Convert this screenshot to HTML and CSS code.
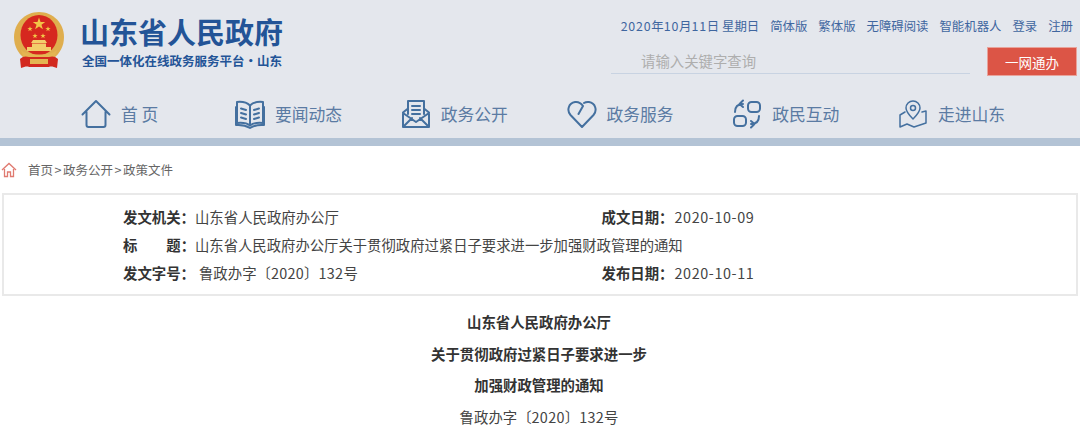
FILE: index.html

```html
<!DOCTYPE html>
<html lang="zh-CN">
<head>
  <meta charset="UTF-8" />
  <title>山东省人民政府</title>
  <link rel="stylesheet" href="styles.css">
</head>
<body>
  <!-- Header -->
  <div class="header">
    <div class="top">
      <div class="brand">
        <svg class="emblem" viewBox="0 0 52 60">
          <defs>
            <polygon id="star" points="0,-5 1.200,-1.600 4.800,-1.500 1.900,0.600 3,4 0,2 -3,4 -1.900,0.600 -4.800,-1.500 -1.200,-1.600"/>
          </defs>
          <path d="M26 0C40 0 51 11 51 25c0 9-4 16-10 21H11C5 41 1 34 1 25 1 11 12 0 26 0z" fill="#dfae4e"/>
          <ellipse cx="26" cy="23" rx="18.500" ry="20" fill="#d6271f"/>
          <use href="#star" transform="translate(26 12) scale(1.300)" fill="#f2c447"/>
          <use href="#star" transform="translate(17 17) scale(.55)" fill="#f2c447"/>
          <use href="#star" transform="translate(35 17) scale(.55)" fill="#f2c447"/>
          <use href="#star" transform="translate(22 24) scale(.55)" fill="#f2c447"/>
          <use href="#star" transform="translate(30 24) scale(.55)" fill="#f2c447"/>
          <path d="M20 28h12l2 3H18zM19 31.500h14V35h5v4H14v-4h5z" fill="#f3cd6a"/>
          <path d="M8 38c6 6 30 6 36 0l-2 6c-8 3-24 3-32 0z" fill="#e4b552"/>
          <path d="M7 47c3-3 6-3 9-2h20c3-1 6-1 9 2l-1 9c-3-1-6-2-8-1H16c-2-1-5 0-8 1z" fill="#d2291f"/>
          <path d="M17 47h18v5H17z" fill="#e4b552"/>
        </svg>
        <div class="brand-text">
          <div class="site-name">山东省人民政府</div>
          <div class="site-sub">全国一体化在线政务服务平台·山东</div>
        </div>
      </div>
      <div class="tools">
        <div class="links">
          <span class="date"><span class="nums">2020</span>年<span class="nums">10</span>月<span class="nums">11</span>日 星期日</span>
          <a>简体版</a><a>繁体版</a><a>无障碍阅读</a><a>智能机器人</a><a>登录</a><a>注册</a>
        </div>
        <div class="search-row">
          <div class="search">请输入关键字查询</div>
          <button class="one-net">一网通办</button>
        </div>
      </div>
    </div>
    <div class="nav">
      <a class="nav-item">
        <svg viewBox="0 0 30 30" width="30" height="30"><path d="M1.500 15.500 15 2l13.500 13.500M5.500 13v13a2 2 0 0 0 2 2h15a2 2 0 0 0 2-2V13"/></svg>
        <span>首 页</span>
      </a>
      <a class="nav-item">
        <svg viewBox="0 0 30 30" width="30" height="30"><path d="M15 6.500C12 3.500 7 2.500 2 3v21c5-.5 10 0 13 2.500 3-2.500 8-3 13-2.500V3c-5-.5-10 .5-13 3.500zM15 6.500v20M1 8v18c6-.5 10 .5 14 3 4-2.500 8-3.500 14-3V8M6 9.500l5 1.500M6 14l5 1.500M6 18.500l5 1.500M24 9.500 19 11M24 14l-5 1.500M24 18.500 19 20"/></svg>
        <span>要闻动态</span>
      </a>
      <a class="nav-item">
        <svg viewBox="0 0 30 30" width="30" height="30"><path d="M7 15V2h16v13M11 7h8M11 11h8M11 15h8M7 9.500l-5 4V28h26V13.500l-5-4M2 14l13 9 13-9M2 28l9-9M28 28l-9-9"/></svg>
        <span>政务公开</span>
      </a>
      <a class="nav-item">
        <svg viewBox="0 0 30 30" width="30" height="30"><path d="M15 28 3.500 16C-.5 11.500 1.500 4 8 3c3.500-.5 6 1 8 4l-4.500 8M15 28l11.500-12c4-4.500 2-12-4.500-13-2-.3-3.500 0-5 1"/></svg>
        <span>政务服务</span>
      </a>
      <a class="nav-item">
        <svg viewBox="0 0 30 30" width="30" height="30"><rect x="16" y="3" width="12" height="10" rx="3.500"/><rect x="2" y="17" width="12" height="10" rx="3.500"/><path d="M3 13c0-5 3-8 8-8M11 1.500 7.500 5 11 8M27 17c0 5-3 8-8 8M19 28.500l3.500-3.500-3.500-3"/></svg>
        <span>政民互动</span>
      </a>
      <a class="nav-item">
        <svg viewBox="0 0 30 30" width="30" height="30" class="thin"><path d="M15 20c-4-4-7-7-7-11a7 7 0 0 1 14 0c0 4-3 7-7 11z"/><circle cx="15" cy="9" r="2.500"/><path d="M7 13 2 16v12l7-3 7 3 12-4V12l-4 1"/></svg>
        <span>走进山东</span>
      </a>
    </div>
  </div>
  <div class="stripe"></div>

  <!-- Breadcrumb -->
  <div class="crumb">
    <svg viewBox="0 0 16 16" width="16" height="16"><path d="M1 8 8 1.500 15 8M3.500 7v7.500h3V10h3v4.500h3V7"/></svg>
    <span>首页<i class="sep">&gt;</i>政务公开<i class="sep">&gt;</i>政策文件</span>
  </div>

  <!-- Document info -->
  <div class="info">
    <div class="info-row">
      <div class="cell"><b>发文机关：</b>山东省人民政府办公厅</div>
      <div class="cell"><b>成文日期：</b><span class="day">2020-10-09</span></div>
    </div>
    <div class="info-row">
      <div class="cell wide"><b class="spread"><i>标</i><i>题：</i></b>山东省人民政府办公厅关于贯彻政府过紧日子要求进一步加强财政管理的通知</div>
    </div>
    <div class="info-row">
      <div class="cell"><b>发文字号：</b><span class="num">鲁政办字〔<span class="nums">2020</span>〕<span class="nums">132</span>号</span></div>
      <div class="cell"><b>发布日期：</b><span class="day">2020-10-11</span></div>
    </div>
  </div>

  <!-- Article -->
  <div class="article">
    <p class="strong">山东省人民政府办公厅</p>
    <p class="strong">关于贯彻政府过紧日子要求进一步</p>
    <p class="strong">加强财政管理的通知</p>
    <p>鲁政办字〔<span class="nums">2020</span>〕<span class="nums">132</span>号</p>
  </div>
</body>
</html>
```

FILE: styles.css

```css
* { margin: 0; padding: 0; box-sizing: border-box; }
html, body { height: 435px; overflow: hidden; }
body { background: #fff; color: #333; font-family: "Noto Sans CJK SC", "Liberation Sans", sans-serif; }

.header { background: #e4e7ed; height: 138px; }
.top { display: flex; justify-content: space-between; height: 84px; padding: 12px 3px 0 13px; }
.brand { display: flex; gap: 15px; }
.emblem { width: 52px; height: 60px; }
.brand-text { color: #235497; font-weight: bold; padding-top: 1px; }
.site-name { font-size: 29px; line-height: 36px; }
.site-sub { font-size: 12.500px; line-height: 18px; margin-top: 3px; margin-left: 2px; }

.tools { width: 466px; }
.links { display: flex; justify-content: flex-end; font-size: 12.400px; line-height: 18px; color: #3f669f; margin-top: 5px; gap: 11px; padding-right: 4px; }
.nums { letter-spacing: .8px; }
.search-row { display: flex; justify-content: space-between; margin-top: 12px; }
.search { width: 359px; height: 27px; border-bottom: 1px solid #c8d3e2; padding-left: 30px; font-size: 14.400px; line-height: 28px; color: #aeaeae; }
.one-net { width: 90px; height: 29px; border: 1px solid #e8a39b; background: #dc5546; color: #fff; font: inherit; font-size: 13.500px; }

.nav { display: flex; padding: 8px 0 0 81px; }
.nav-item { display: flex; align-items: center; width: 165.750px; gap: 10px; height: 44px; color: #5b7ba3; font-size: 16.800px; }
.nav-item:first-child { width: 154px; }
.nav-item svg { fill: none; stroke: #44709f; stroke-width: 2; stroke-linecap: round; stroke-linejoin: round; flex: none; }
.nav-item svg.thin { stroke-width: 1.500; }

.stripe { height: 8px; background: #b3c3d5; }

.crumb { display: flex; align-items: center; gap: 11px; height: 47px; padding-left: 1px; font-size: 12.500px; color: #666; }
.crumb svg { fill: none; stroke: #e07a70; stroke-width: 1.300; }
.sep { font-style: normal; padding: 0 1.500px; }

.info { margin: 0 2px; height: 103px; border: 2px solid #e9e9e9; padding: 8px 0 0 119px; font-size: 14.400px; color: #444; }
.info-row { display: flex; height: 28px; line-height: 28px; }
.cell { flex: none; width: 478.500px; white-space: nowrap; }
.cell.wide { width: auto; display: flex; font-size: 14.350px; }
.cell b { color: #333; }
.spread { display: inline-flex; justify-content: space-between; width: 72px; }
.spread i { font-style: normal; }
.num { margin-left: 4px; }
.num .nums, .article .nums { letter-spacing: .3px; }
.day { letter-spacing: .6px; margin-left: 1px; }

.article { text-align: center; font-size: 14.400px; line-height: 31.500px; color: #444; padding: 10px 2px 0 0; }
.strong { font-weight: bold; color: #333; }
```
